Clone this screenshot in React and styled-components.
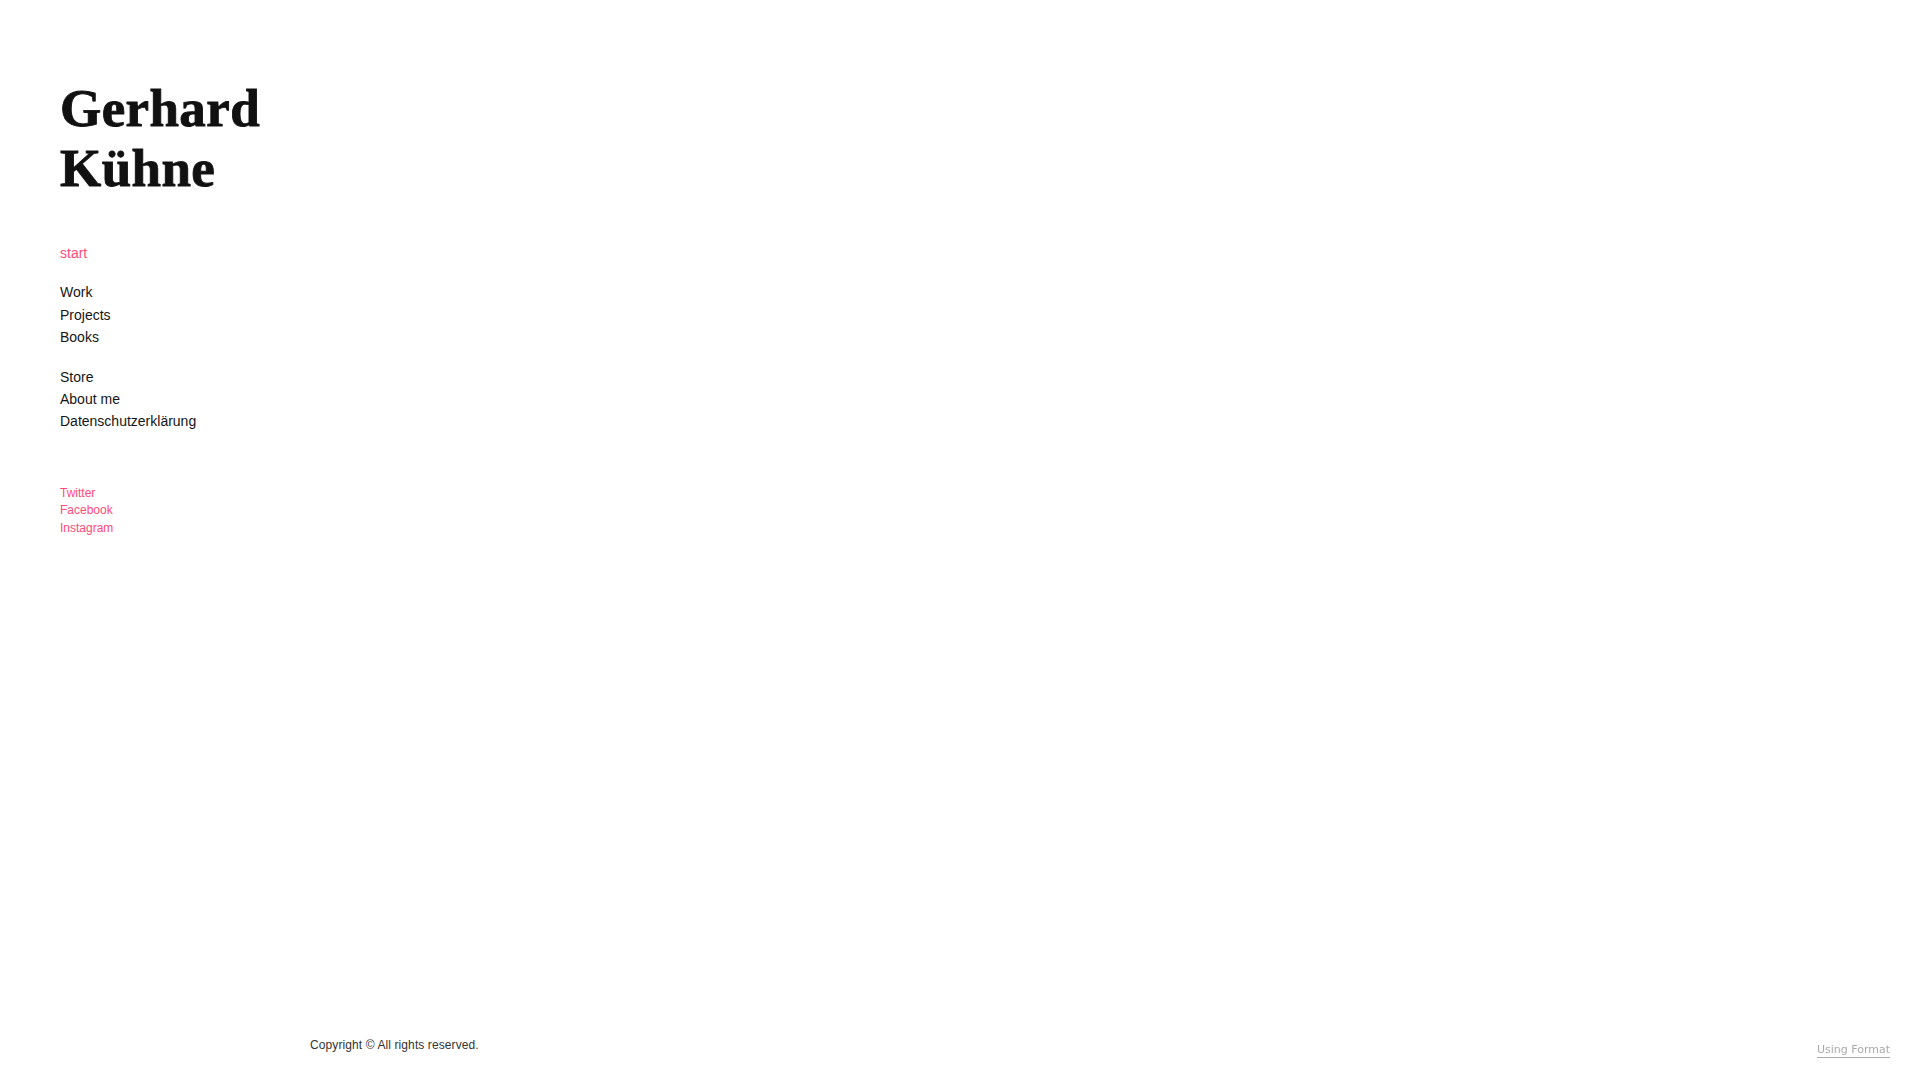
import styled, { createGlobalStyle } from 'styled-components';

const GlobalStyle = createGlobalStyle`
    html, body {
        margin: 0;
        padding: 0;
        background: #fff;
    }
    body {
        font-family: "Liberation Sans", Arial, sans-serif;
        color: #111;
    }
    a {
        text-decoration: none;
        color: inherit;
    }
`;

const Page = styled.div`
    display: grid;
    grid-template-columns: 310px 1fr;
    min-height: 100vh;
`;

const Sidebar = styled.aside`
    padding: 78px 0 0 60px;
`;

const Title = styled.h1`
    margin: 0;
    font-family: "Liberation Serif", "Times New Roman", serif;
    font-weight: 700;
    font-size: 53px;
    line-height: 60px;
    letter-spacing: 0.4px;
    color: #111;
    -webkit-text-stroke: 0.9px #111;
`;

const NavGroup = styled.nav`
    display: flex;
    flex-direction: column;
    margin-top: ${(p) => p.$gap}px;
`;

const NavLink = styled.a`
    font-size: ${(p) => (p.$small ? 12 : 14)}px;
    line-height: ${(p) => (p.$small ? 17.5 : 22.4)}px;
    color: ${(p) => (p.$accent ? '#ff4a78' : '#151515')};
`;

const Main = styled.main`
    display: flex;
    flex-direction: column;
    justify-content: flex-end;
    padding-bottom: 28px;
`;

const Copyright = styled.p`
    margin: 0;
    font-size: 12px;
    color: #333;
    letter-spacing: 0.1px;
`;

const Badge = styled.a`
    position: fixed;
    right: 30px;
    bottom: 22px;
    font-family: "DejaVu Sans", sans-serif;
    font-size: 11px;
    color: #aaa;
    border-bottom: 1px solid #aaa;
    padding-bottom: 1px;
`;

export default function App() {
    return (
        <>
            <GlobalStyle />
            <Page>
                <Sidebar>
                    <Title>Gerhard<br />Kühne</Title>
                    <NavGroup $gap={44}>
                        <NavLink $accent href="#">start</NavLink>
                    </NavGroup>
                    <NavGroup $gap={17}>
                        <NavLink href="#">Work</NavLink>
                        <NavLink href="#">Projects</NavLink>
                        <NavLink href="#">Books</NavLink>
                    </NavGroup>
                    <NavGroup $gap={17}>
                        <NavLink href="#">Store</NavLink>
                        <NavLink href="#">About me</NavLink>
                        <NavLink href="#">Datenschutzerklärung</NavLink>
                    </NavGroup>
                    <NavGroup $gap={52}>
                        <NavLink $accent $small href="#">Twitter</NavLink>
                        <NavLink $accent $small href="#">Facebook</NavLink>
                        <NavLink $accent $small href="#">Instagram</NavLink>
                    </NavGroup>
                </Sidebar>
                <Main>
                    <Copyright>Copyright © All rights reserved.</Copyright>
                </Main>
            </Page>
            <Badge href="#">Using Format</Badge>
        </>
    );
}
